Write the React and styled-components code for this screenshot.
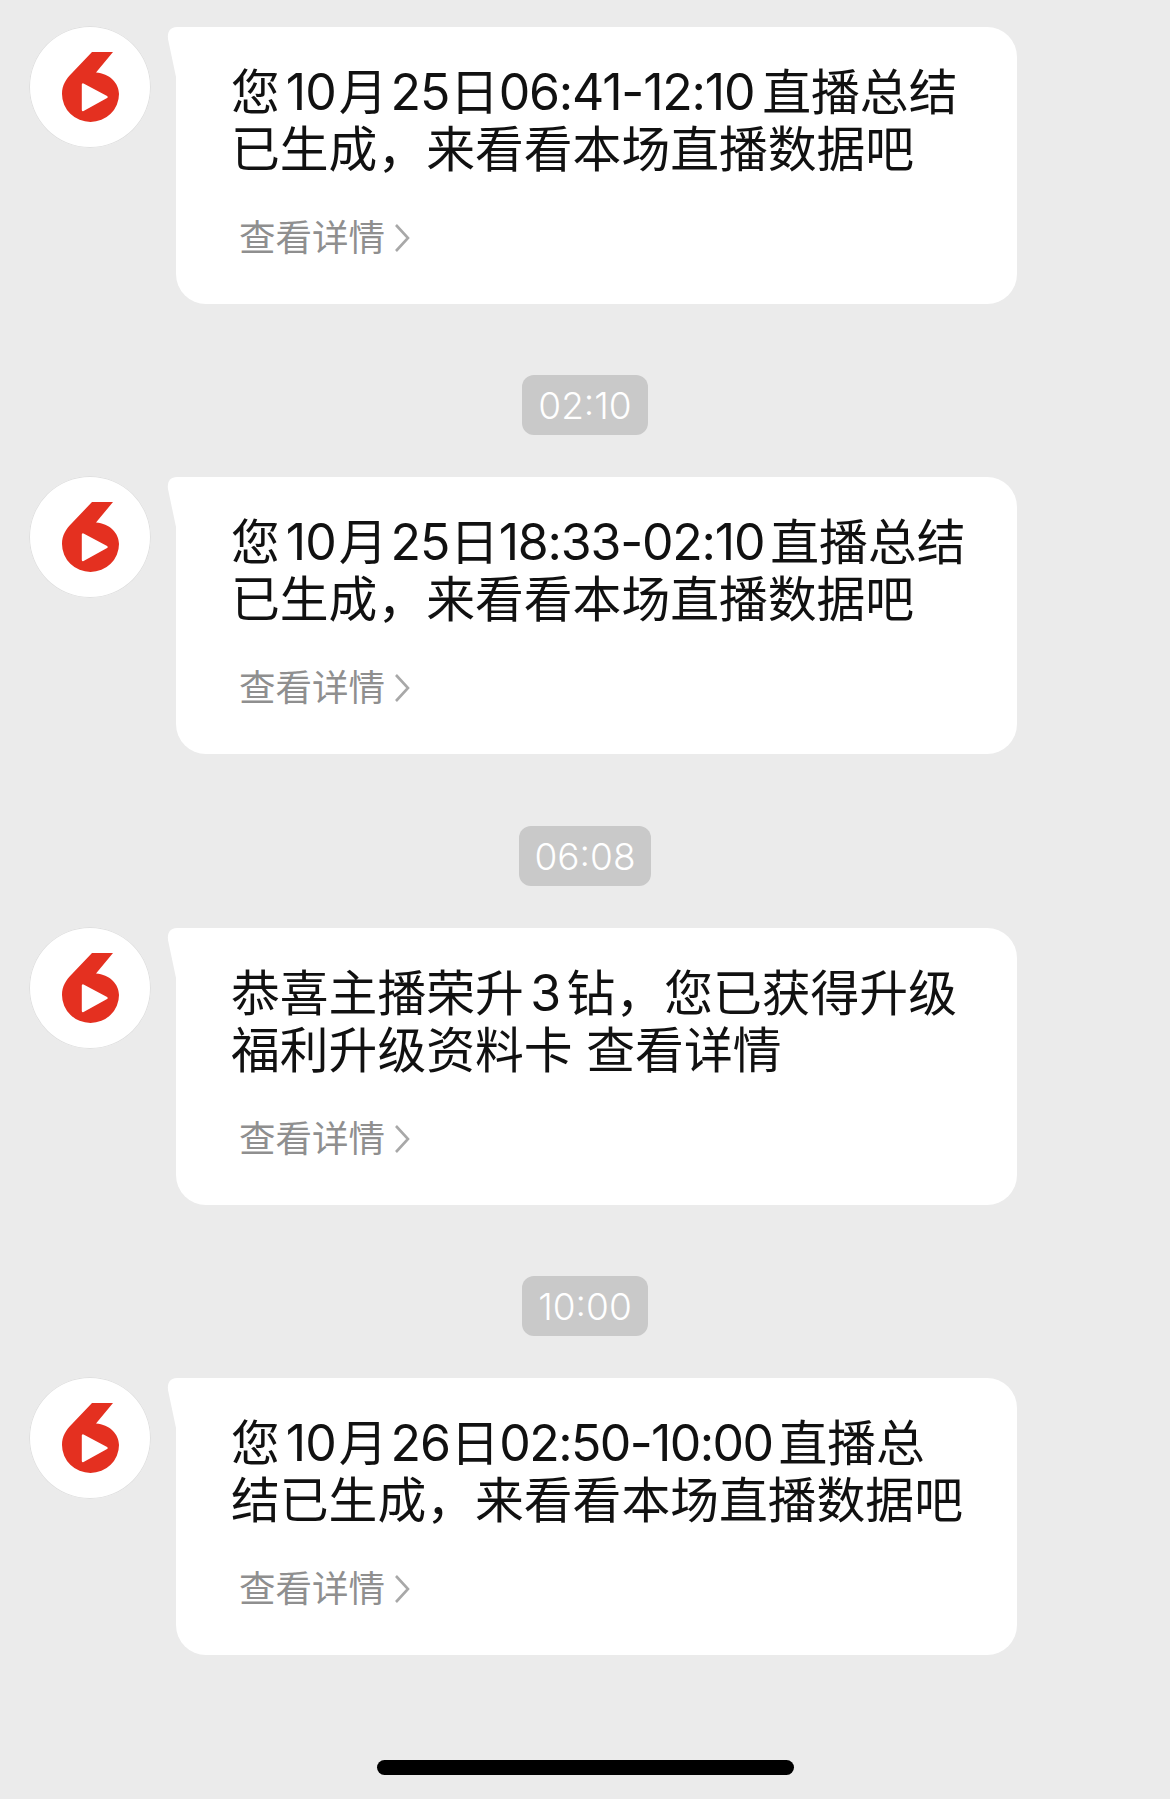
import React from "react";
import styled, { createGlobalStyle } from "styled-components";

const Global = createGlobalStyle`
  html, body { margin: 0; padding: 0; background: #ebebeb; }
  body { font-family: "Inter", "Noto Sans CJK SC", sans-serif; }
`;

const Page = styled.main`
  width: 1170px;
  height: 1799px;
  overflow: hidden;
  background: #ebebeb;
  padding-top: 27px;
  box-sizing: border-box;
  display: flex;
  flex-direction: column;
  align-items: center;
`;

const Row = styled.section`
  align-self: flex-start;
  margin-left: 29px;
  display: flex;
  gap: 25px;
  align-items: flex-start;
`;

const Avatar = styled.div`
  width: 122px;
  height: 122px;
  margin-top: -1px;
  border-radius: 50%;
  background: #fff;
  box-shadow: 0 0 0 1px #e0e0e0 inset;
  flex: none;
  display: flex;
  align-items: center;
  justify-content: center;
`;

const Bubble = styled.article`
  position: relative;
  width: 841px;
  height: 277px;
  box-sizing: border-box;
  background: #fff;
  border-radius: 30px;
  padding: 37px 0 0 55px;

  &::before {
    content: "";
    position: absolute;
    left: -9px;
    top: 0;
    width: 50px;
    height: 50px;
    background: #fff;
    clip-path: path("M9 50 L1 12 C0 5 3 0 10 0 H50 V50 Z");
  }
`;

const Message = styled.div`
  position: relative;
  font-size: 48.8px;
  line-height: 57px;
  color: #111;
  white-space: nowrap;
`;

const Line = styled.div``;

const Num = styled.span`
  font-size: 50px;
  line-height: 1;
  letter-spacing: ${(p) => p.$t ?? -1}px;
  margin: 0 ${(p) => p.$r ?? 3}px 0 ${(p) => p.$l ?? 3}px;
`;

const Link = styled.div`
  position: relative;
  display: flex;
  align-items: center;
  gap: 9px;
  margin: 40px 0 0 8px;
  font-size: 36.5px;
  line-height: 40px;
  color: #8f8f8f;
`;

const Stamp = styled.time`
  margin: ${(p) => p.$top || 71}px 0 42px;
  height: 60px;
  width: ${(p) => p.$w}px;
  background: #c9c9c9;
  border-radius: 12px;
  color: #fff;
  font-size: 37px;
  font-weight: 300;
  display: flex;
  align-items: center;
  justify-content: center;
`;

const HomeBar = styled.div`
  margin-top: 105px;
  flex: none;
  width: 417px;
  height: 15px;
  border-radius: 8px;
  background: #000;
`;

const Logo = () => (
  <svg viewBox="0 0 120 120" width="120" height="120">
    <path
      d="M62 25 H83 L66 45.5 C79.5 46.5 89 56 89 67 A28.5 28 0 0 1 32 67 C32 58 36 52 42 46 Z"
      fill="#e43020"
    />
    <path
      d="M53 57.5 V83 L76.5 70 Z"
      fill="#fff"
      stroke="#fff"
      strokeWidth="2.4"
      strokeLinejoin="round"
    />
  </svg>
);

const Chevron = () => (
  <svg width="16" height="30" viewBox="0 0 16 30">
    <path d="M2 2 L14 15 L2 28" fill="none" stroke="#a8a8a8" strokeWidth="2.6" />
  </svg>
);

const Card = ({ lines }) => (
  <Row>
    <Avatar><Logo /></Avatar>
    <Bubble>
      <Message>
        {lines.map((l, i) => <Line key={i}>{l}</Line>)}
      </Message>
      <Link>查看详情<Chevron /></Link>
    </Bubble>
  </Row>
);

export default function App() {
  return (
    <Page>
      <Global />
      <Card lines={[
        <>您<Num $l={6}>10</Num>月<Num $r={0.5}>25</Num>日<Num $l={0} $t={-1.2} $r={8}>06:41-12:10</Num>直播总结</>,
        "已生成，来看看本场直播数据吧",
      ]} />
      <Stamp $w={126}>02:10</Stamp>
      <Card lines={[
        <>您<Num $l={6}>10</Num>月<Num $r={0.5}>25</Num>日<Num $l={0} $t={-1.2} $r={6}>18:33-02:10</Num>直播总结</>,
        "已生成，来看看本场直播数据吧",
      ]} />
      <Stamp $w={132} $top={72}>06:08</Stamp>
      <Card lines={[
        <>恭喜主播荣升<Num $l={6.4} $r={6.5}>3</Num>钻，您已获得升级</>,
        "福利升级资料卡 查看详情",
      ]} />
      <Stamp $w={126}>10:00</Stamp>
      <Card lines={[
        <>您<Num $l={6}>10</Num>月<Num $r={0.5}>26</Num>日<Num $l={0} $t={-1.6} $r={5.9}>02:50-10:00</Num>直播总</>,
        "结已生成，来看看本场直播数据吧",
      ]} />
      <HomeBar />
    </Page>
  );
}
